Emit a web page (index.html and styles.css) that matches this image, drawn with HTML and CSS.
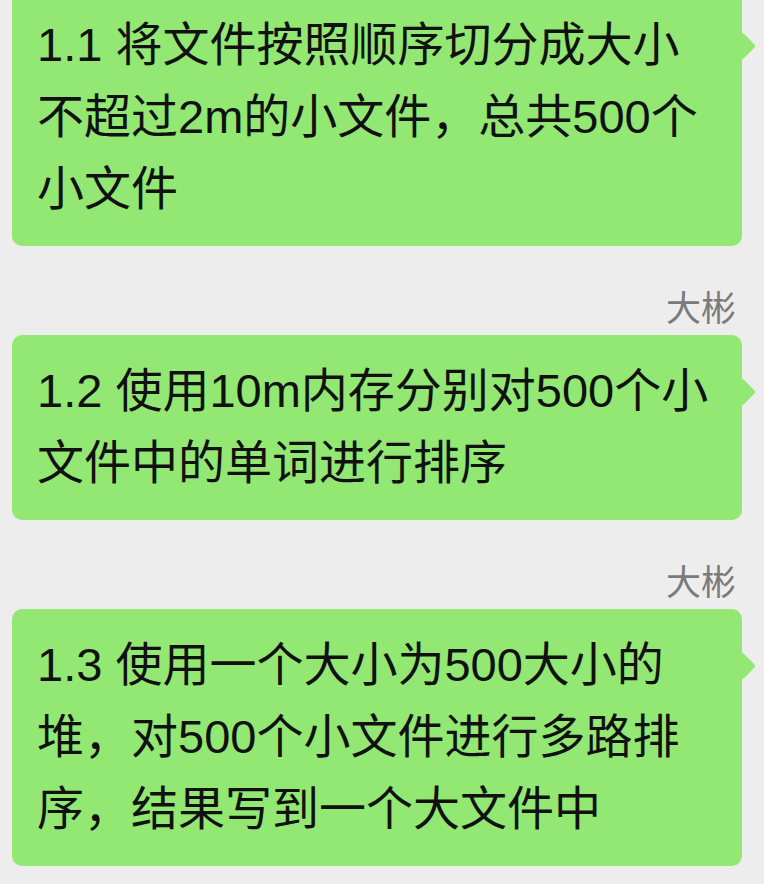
FILE: index.html
```html
<!DOCTYPE html>
<html lang="zh-CN">
<head>
<meta charset="utf-8">
<title>聊天记录</title>
<link rel="stylesheet" href="styles.css">
</head>
<body>
<div class="chat">
  <div class="bubble">1.1 将文件按照顺序切分成大小<br>不超过2m的小文件，总共500个<br>小文件</div>
  <div class="name">大彬</div>
  <div class="bubble">1.2 使用10m内存分别对500个小<br>文件中的单词进行排序</div>
  <div class="name">大彬</div>
  <div class="bubble">1.3 使用一个大小为500大小的<br>堆，对500个小文件进行多路排<br>序，结果写到一个大文件中</div>
</div>
</body>
</html>
```
FILE: styles.css
```css
html, body {
  margin: 0;
  padding: 0;
  background: #ededed;
}

body {
  width: 764px;
  height: 884px;
  overflow: hidden;
  font-family: "Liberation Sans", "Noto Sans CJK SC", sans-serif;
}

.chat {
  display: flex;
  flex-direction: column;
  margin-top: -11px;
  padding: 0 22px 0 12px;
}

.bubble {
  position: relative;
  background: #92e872;
  border-radius: 10px;
  padding: 20px 24px 21px 25px;
  font-size: 47px;
  line-height: 72px;
  color: #111;
  white-space: nowrap;
}

.bubble::after {
  content: "";
  position: absolute;
  right: -10px;
  top: 47px;
  width: 20px;
  height: 20px;
  background: #92e872;
  border-radius: 3px;
  transform: rotate(45deg);
}

.name {
  margin: 43px 0 6px;
  padding-right: 6px;
  text-align: right;
  font-size: 35px;
  line-height: 40px;
  color: #7a7a7a;
}
```
